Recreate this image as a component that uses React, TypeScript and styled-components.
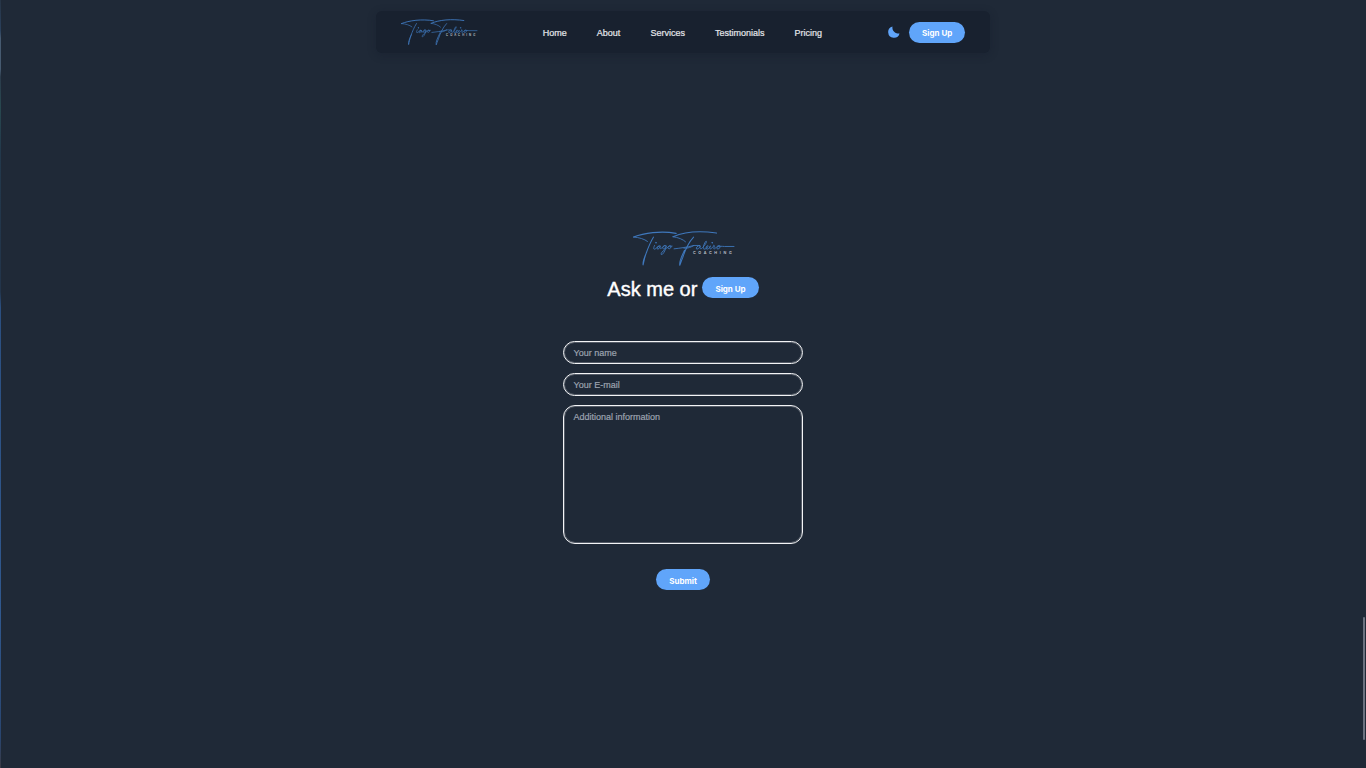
import React from "react";
import styled, { createGlobalStyle } from "styled-components";

const GlobalStyle = createGlobalStyle`
  *, *::before, *::after { box-sizing: border-box; }
  body {
    margin: 0;
    background: #1f2937;
    color: #ffffff;
    font-family: "Liberation Sans", Arial, sans-serif;
    font-size: 9px;
  }
`;

const Page = styled.div`
  min-height: 100vh;
  display: flex;
  flex-direction: column;
  align-items: center;
  padding-top: 11px;
`;

const EdgeStrip = styled.div`
  position: fixed;
  top: 0;
  bottom: 0;
  left: 0;
  width: 1px;
  background: linear-gradient(
    #263445 0%, #2a405c 4%, #465a70 5%, #465a70 9%, #2b3b4b 10%,
    #28484f 14%, #22384b 20%, #22344a 38%, #2b4f80 40%, #30588e 80%,
    #29456f 96%, #3a3a44 100%
  );
`;

const ScrollThumb = styled.div`
  position: fixed;
  right: 1px;
  bottom: 28px;
  width: 2px;
  height: 16vh;
  border-radius: 1px;
  background: #6b7280;
`;

const NavBar = styled.header`
  width: 45%;
  min-width: 600px;
  height: 42px;
  padding: 0 25px;
  display: flex;
  align-items: center;
  justify-content: space-between;
  border-radius: 6px;
  background: #18212f;
  box-shadow: 0 2px 8px rgba(17, 24, 39, 0.3);
`;

const NavLinks = styled.nav`
  display: flex;
  gap: 30px;
  padding-top: 2px;
`;

const NavLink = styled.a`
  color: #e5e7eb;
  line-height: 12px;
  text-decoration: none;
  -webkit-text-stroke: 0.2px currentColor;
`;

const Actions = styled.div`
  display: flex;
  align-items: center;
  gap: 9px;
`;

const IconButton = styled.button`
  display: flex;
  padding: 0;
  border: 0;
  background: none;
  cursor: pointer;
`;

const PillButton = styled.button`
  height: 21px;
  padding: 2px 13px 0;
  border: 0;
  border-radius: 11px;
  background: #60a5fa;
  color: #ffffff;
  font: 700 8px/12px Inter, sans-serif;
  white-space: nowrap;
  cursor: pointer;
`;

const LogoSvg = styled.svg<{ $width: number }>`
  display: block;
  width: ${(p) => p.$width}px;
  height: auto;
  overflow: visible;
`;

const Contact = styled.main`
  flex: 1;
  width: 100%;
  display: flex;
  flex-direction: column;
  align-items: center;
  justify-content: center;
`;

const TitleRow = styled.div`
  display: flex;
  align-items: flex-start;
  gap: 5px;
  margin-top: 11px;
`;

const Title = styled.h1`
  margin: 0;
  padding-top: 1px;
  font-size: 20px;
  font-weight: 400;
  line-height: 22px;
  -webkit-text-stroke: 0.4px currentColor;
`;

const Form = styled.form`
  width: 17.5%;
  min-width: 220px;
  margin-top: 41px;
  display: flex;
  flex-direction: column;
  align-items: center;
  gap: 9px;
`;

const fieldStyle = `
  display: block;
  width: 100%;
  margin: 0;
  border: 1px solid #f3f4f6;
  box-shadow: inset 0 0 0 1px rgba(243, 244, 246, 0.25);
  background: transparent;
  color: #ffffff;
  font: 400 9px/12px "Liberation Sans", Arial, sans-serif;
  outline: none;
  &::placeholder {
    color: #9ca3af;
    opacity: 1;
    -webkit-text-stroke: 0.2px currentColor;
  }
`;

const Input = styled.input`
  ${fieldStyle}
  height: 23px;
  padding: 0 9px;
  border-radius: 12px;
`;

const TextArea = styled.textarea`
  ${fieldStyle}
  height: 139px;
  padding: 5px 9px;
  border-radius: 12px;
  resize: none;
`;

const SubmitRow = styled.div`
  padding-top: 16px;
`;

function Logo({ width }: { width: number }) {
  return (
    <LogoSvg $width={width} viewBox="0 0 300 105" role="img" aria-label="Tiago Faleiro Coaching">
      <g fill="none" stroke="#3f78bd" strokeWidth="2.6" strokeLinecap="round" strokeLinejoin="round">
        <path strokeWidth="3.6" d="M2 18C32 6 82 -1 128 7" />
        <path d="M2 18C18 19 34 24 43 31" />
        <path strokeWidth="3" d="M61 18C51 34 45 50 39 66C34 80 32 92 30 101C28 91 34 77 41 62" />
        <path d="M64 43C61 50 60 54 64 54C69 53 72 46 79 44C72 44 69 54 74 54C79 53 81 44 81 44C78 54 83 54 87 49C91 43 97 43 97 43C89 42 85 53 91 53C96 52 99 44 99 44C96 59 89 71 84 70C80 66 96 53 103 49C107 42 113 42 113 47C112 55 102 54 104 48C105 44 111 46 116 45" />
        <circle cx="68" cy="35" r="1" />
        <path strokeWidth="3.6" d="M119 17C151 3 200 -1 248 6" />
        <path d="M119 17C134 19 149 25 156 32" />
        <path strokeWidth="3" d="M180 18C164 35 154 59 148 78C143 90 141 97 139 102C136 91 145 74 153 57" />
        <path d="M122 53C138 51 158 49 181 43C171 48 166 52 151 51" />
        <path d="M181 43L199 43C190 43 185 53 190 54C196 54 200 44 200 44C197 54 202 55 207 49C217 39 221 28 216 31C211 36 206 54 211 54C216 54 224 48 223 44C218 42 214 53 220 54C226 54 230 44 230 44C226 53 228 56 235 50L241 43C237 40 243 46 242 47C237 54 241 55 246 50C251 43 258 41 259 46C259 54 247 56 249 49C252 43 264 46 272 46L300 46" />
        <circle cx="235" cy="35" r="1" />
      </g>
      <text
        x="178"
        y="68"
        fill="#c5cbd4"
        fontFamily="Inter, sans-serif"
        fontSize="11"
        fontWeight="600"
        letterSpacing="8"
      >
        COACHING
      </text>
    </LogoSvg>
  );
}

function MoonIcon() {
  return (
    <svg width="12" height="12" viewBox="0 0 24 24" aria-hidden="true">
      <path fill="#60a5fa" d="M9 1A11.500 11.500 0 1 0 23 15A12 12 0 0 1 9 1Z" />
    </svg>
  );
}

const links = ["Home", "About", "Services", "Testimonials", "Pricing"];

export default function App() {
  return (
    <>
      <GlobalStyle />
      <Page>
        <NavBar>
          <Logo width={76} />
          <NavLinks aria-label="Main">
            {links.map((label) => (
              <NavLink key={label} href={`#${label.toLowerCase()}`}>
                {label}
              </NavLink>
            ))}
          </NavLinks>
          <Actions>
            <IconButton type="button" aria-label="Toggle dark mode">
              <MoonIcon />
            </IconButton>
            <PillButton type="button">Sign Up</PillButton>
          </Actions>
        </NavBar>
        <Contact>
          <Logo width={101} />
          <TitleRow>
            <Title>Ask me or</Title>
            <PillButton type="button">Sign Up</PillButton>
          </TitleRow>
          <Form onSubmit={(e) => e.preventDefault()}>
            <Input type="text" name="name" placeholder="Your name" aria-label="Your name" />
            <Input type="email" name="email" placeholder="Your E-mail" aria-label="Your E-mail" />
            <TextArea
              name="message"
              placeholder="Additional information"
              aria-label="Additional information"
            />
            <SubmitRow>
              <PillButton type="submit">Submit</PillButton>
            </SubmitRow>
          </Form>
        </Contact>
      </Page>
      <EdgeStrip />
      <ScrollThumb />
    </>
  );
}
